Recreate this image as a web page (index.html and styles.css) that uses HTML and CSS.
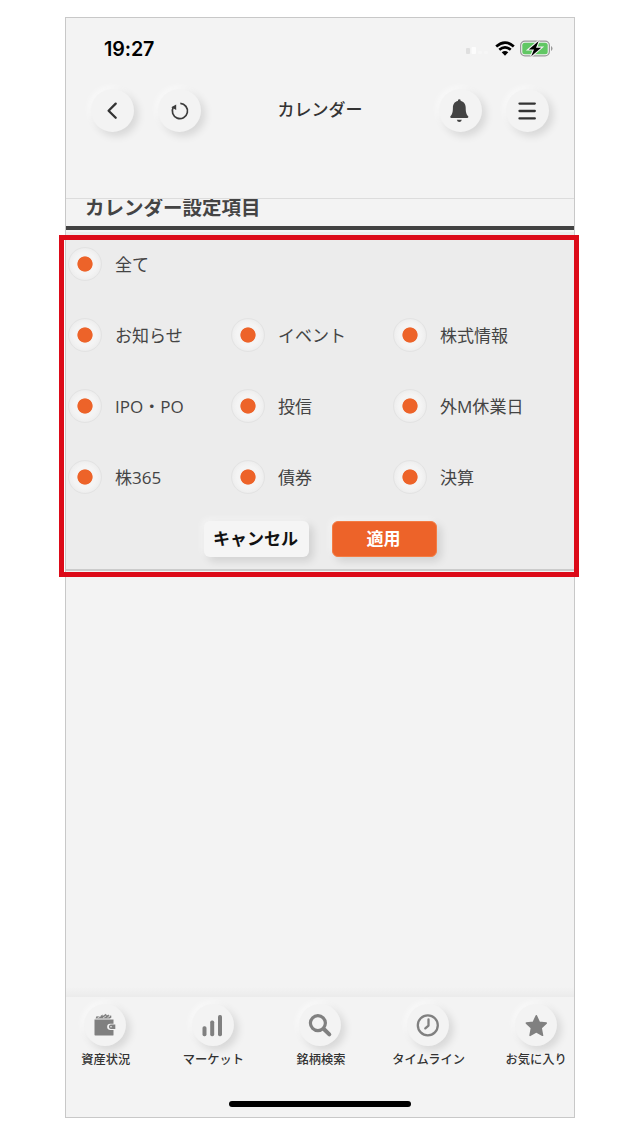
FILE: index.html
```html
<!DOCTYPE html>
<html lang="ja">
<head>
<meta charset="utf-8">
<title>カレンダー</title>
<link rel="stylesheet" href="styles.css">
</head>
<body>
<div class="phone">
  <div class="status">
    <span class="time">19:27</span>
    <div class="indicators">
      <svg class="signal" width="22" height="8" viewBox="0 0 22 8"><rect x="0" y="1" width="4" height="6" rx="1" fill="#dfdfdf"/><rect x="5.500" y="0" width="4.500" height="7" rx="1" fill="#fcfcfc"/><rect x="12" y="4" width="4" height="3" rx="1" fill="#f6f6f6"/><rect x="18" y="4" width="4" height="3" rx="1" fill="#f6f6f6"/></svg>
      <svg class="wifi" width="20" height="15" viewBox="0 0 20 15"><g fill="none" stroke="#000" stroke-width="2.700"><path d="M1.200 5.500Q10 -2.400 18.800 5.500"/><path d="M4.300 8.800Q10 3.900 15.700 8.800"/></g><path d="M6.700 11.300Q10 8.600 13.300 11.300L10 14.700Z"/></svg>
      <svg class="battery" width="33" height="17" viewBox="0 0 33 17"><rect x=".6" y="1.100" width="28.800" height="14.800" rx="4.300" fill="#f3f3f3" stroke="#999" stroke-width="1.200"/><rect x="2.300" y="2.800" width="25.400" height="11.400" rx="2.500" fill="#61c764"/><path d="M31 6v5q1.500-.7 1.500-2.500T31 6Z" fill="#999"/><path d="M18.700 1L8.800 9.500H14L11.200 16.200L21.200 7.700H16Z" fill="#000" stroke="#f3f3f3" stroke-width="2.200" paint-order="stroke"/></svg>
    </div>
  </div>
  <header class="header">
    <button class="round"><svg width="43" height="43" viewBox="0 0 43 43"><path d="M24.700 14.600L17.600 21.700L24.700 28.800" fill="none" stroke="#333" stroke-width="2.300" stroke-linecap="round" stroke-linejoin="round"/></svg></button>
    <button class="round reload"><svg width="43" height="43" viewBox="0 0 43 43"><path d="M22.300 14.400A7.600 7.600 0 1 1 15.300 18.200" fill="none" stroke="#3b3b3b" stroke-width="1.700"/><path d="M13.300 18.300L18.200 15.400L18.200 21Z" fill="#3b3b3b"/></svg></button>
    <h1 class="title">カレンダー</h1>
    <button class="round bell"><svg width="43" height="43" viewBox="0 0 43 43"><path d="M20.300 10.300a1.400 1.400 0 0 0-1.400 1.700C15.300 12.700 13.900 15.500 13.900 18.800c0 5-.8 6.500-2.300 8.300-.8 1-.3 1.900.8 1.900h15.800c1.100 0 1.600-.9.800-1.900-1.500-1.800-2.300-3.300-2.300-8.300 0-3.300-1.400-6.100-5-6.800a1.400 1.400 0 0 0-1.400-1.700Z" fill="#444"/><path d="M17.800 30.700h5q-.5 2.200-2.500 2.200t-2.500-2.200Z" fill="#444"/></svg></button>
    <button class="round menu"><svg width="43" height="43" viewBox="0 0 43 43"><path d="M13.500 14.600h15.300M13.500 22h15.300M13.500 29.400h15.300" fill="none" stroke="#333" stroke-width="2.300" stroke-linecap="round"/></svg></button>
  </header>
  <section class="heading"><h2>カレンダー設定項目</h2></section>
  <section class="panel">
    <div class="options">
      <label class="option all"><i class="radio"></i><span>全て</span></label>
      <label class="option"><i class="radio"></i><span>お知らせ</span></label>
      <label class="option"><i class="radio"></i><span>イベント</span></label>
      <label class="option"><i class="radio"></i><span>株式情報</span></label>
      <label class="option"><i class="radio"></i><span>IPO・PO</span></label>
      <label class="option"><i class="radio"></i><span>投信</span></label>
      <label class="option"><i class="radio"></i><span>外M休業日</span></label>
      <label class="option"><i class="radio"></i><span>株365</span></label>
      <label class="option"><i class="radio"></i><span>債券</span></label>
      <label class="option"><i class="radio"></i><span>決算</span></label>
    </div>
    <div class="actions">
      <button class="btn">キャンセル</button>
      <button class="btn primary">適用</button>
    </div>
    <div class="highlight"></div>
  </section>
  <main class="content"></main>
  <nav class="tabs">
    <a class="tab"><i class="round small"><svg width="42" height="42" viewBox="0 0 42 42"><path d="M10.500 15.500h19v4.200h-3.200a2.900 2.900 0 0 0 0 6.300h3.200v5q0 .6-.8.600H11.300q-.8 0-.8-.8Z" fill="#808080"/><path d="M11.500 14.500l1-2.300 3 .2 3.200-2v1.500l3.200-2.200.9 1.700 1.800-.9.500 1.200 2.100-.3.200 2.200L26 14.500Z" fill="#808080"/><path d="M13.500 14l3.500-2.200M19 14l3-2M23.500 13.600l2.500-1.500" stroke="#f3f3f3" stroke-width=".7"/><path d="M31.300 20.500h-4.600a2.300 2.300 0 0 0 0 4.500h4.600Z" fill="#808080"/><circle cx="27" cy="22.800" r=".8" fill="#f3f3f3"/></svg></i><span>資産状況</span></a>
    <a class="tab"><i class="round small"><svg width="42" height="42" viewBox="0 0 42 42"><g fill="#808080"><rect x="10.500" y="22.300" width="4" height="10" rx="1.700"/><rect x="18.200" y="16.500" width="4" height="15.800" rx="1.700"/><rect x="26" y="11" width="4" height="21.300" rx="1.700"/></g></svg></i><span>マーケット</span></a>
    <a class="tab"><i class="round small"><svg width="42" height="42" viewBox="0 0 42 42"><g fill="none" stroke="#808080" stroke-linecap="round"><circle cx="18.900" cy="19.100" r="7.500" stroke-width="3.200"/><path d="M24.800 25L30.300 30.400" stroke-width="4"/></g></svg></i><span>銘柄検索</span></a>
    <a class="tab"><i class="round small"><svg width="42" height="42" viewBox="0 0 42 42"><g fill="none" stroke="#808080" stroke-width="2.300" stroke-linecap="round" stroke-linejoin="round"><circle cx="20.800" cy="21.300" r="10"/><path d="M21.500 15.500V21.600L18.300 24.400"/></g></svg></i><span>タイムライン</span></a>
    <a class="tab"><i class="round small"><svg width="42" height="42" viewBox="0 0 42 42"><path d="M21.300 11.800L24.300 18.300L31.200 19.100L26.100 24L27.500 31.300L21.300 27.900L15.100 31.300L16.500 24L11.400 19.100L18.300 18.300Z" fill="#808080" stroke="#808080" stroke-width="1.600" stroke-linejoin="round"/></svg></i><span>お気に入り</span></a>
  </nav>
  <div class="home"></div>
</div>
</body>
</html>
```
FILE: styles.css
```css
* { box-sizing: border-box; }
body {
  margin: 0;
  padding: 17px 0 0 65px;
  background: #fff;
  color: #333;
  font-family: "Open Sans", "Noto Sans CJK JP", sans-serif;
}
button { border: 0; padding: 0; font: inherit; }
svg { display: block; }
.phone {
  display: flex;
  flex-direction: column;
  width: 510px;
  height: 1101px;
  border: 1px solid #c8c8c8;
  background: #f3f3f3;
}
.status {
  display: flex;
  justify-content: space-between;
  align-items: center;
  height: 60px;
  padding: 0 21px 0 38px;
}
.time {
  padding-top: 2px;
  color: #000;
  font: 600 19.700px/24px Inter, sans-serif;
  letter-spacing: -0.1px;
}
.indicators { display: flex; align-items: center; }
.signal { margin: 6px 7px 0 0; }
.wifi { margin-right: 5px; }
.header {
  display: flex;
  align-items: center;
  height: 64px;
  padding: 0 25px;
}
.round {
  display: block;
  flex: none;
  width: 43px;
  height: 43px;
  border-radius: 50%;
  background: #f3f3f3;
  box-shadow: 4px 4px 9px rgba(0, 0, 0, .12), -2px -2px 6px rgba(255, 255, 255, .65);
}
.reload { margin-left: 24px; }
.title {
  flex: 1;
  margin: 0;
  padding-bottom: 2px;
  text-align: center;
  font: 500 17px/24px "Noto Sans CJK JP", sans-serif;
}
.menu { margin-left: 24px; }
.heading {
  height: 32px;
  margin-top: 56px;
  border-top: 1px solid #dcdcdc;
  border-bottom: 4px solid #414141;
  overflow: hidden;
}
.heading h2 {
  margin: -6px 0 0 19px;
  color: #444;
  font: 700 19.500px/28px "Noto Sans CJK JP", sans-serif;
}
.panel {
  position: relative;
  height: 339px;
  margin-top: 2px;
  padding-top: 14.600px;
  background: #ececec;
  border-bottom: 2px solid #cbcbcb;
}
.options {
  display: grid;
  grid-template-columns: 163px 162px 1fr;
  row-gap: 37px;
  padding-left: 2px;
}
.all { grid-column: 1 / -1; }
.option {
  display: flex;
  align-items: center;
  gap: 13px;
  height: 34px;
  color: #444;
  font-size: 17.050px;
  line-height: 24px;
  white-space: nowrap;
}
.option span { padding-top: 2px; }
.radio {
  flex: none;
  width: 34px;
  height: 34px;
  border: 1px solid #e3e3e3;
  border-radius: 50%;
  background: radial-gradient(circle at 50% 50%, #ed6329 0 7.200px, #f4f4f4 8px 11px, #efefef 15px, #e9e9e9 17px);
}
.actions {
  display: flex;
  gap: 23px;
  margin: 27px 0 0 137.600px;
}
.btn {
  width: 105px;
  height: 36px;
  padding: 0 1px 2px 0;
  border-radius: 6px;
  background: #f5f5f5;
  color: #111;
  box-shadow: 4px 4px 9px rgba(0, 0, 0, .12), -2px -2px 6px rgba(255, 255, 255, .5);
  font: 700 17px/24px "Noto Sans CJK JP", sans-serif;
}
.primary {
  background: #ed6329;
  color: #fff;
  border: 1px solid #f47c43;
}
.highlight {
  position: absolute;
  inset: 3px -5px -8px -7px;
  border: 5px solid #dc0a18;
}
.content {
  flex: 1;
  background: linear-gradient(to top, #ebebeb, #f3f3f3 10px);
}
.tabs {
  display: flex;
  height: 104px;
  padding-top: 7px;
  margin: 0 -15.500px 0 -14.500px;
}
.tab {
  display: flex;
  flex: 1;
  flex-direction: column;
  align-items: center;
  font: 500 12.250px/18px "Noto Sans CJK JP", sans-serif;
}
.tab span { margin: 4px 0 0 1px; }
.small { width: 42px; height: 42px; }
.home {
  width: 182px;
  height: 6px;
  margin: 0 0 10px 163px;
  border-radius: 3px;
  background: #000;
}
```
